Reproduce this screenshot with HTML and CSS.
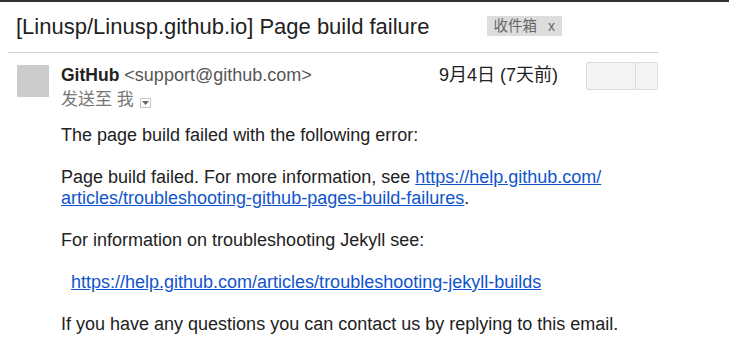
FILE: index.html
```html
<!DOCTYPE html>
<html lang="zh-CN">
<head>
    <meta charset="UTF-8">
    <title>[Linusp/Linusp.github.io] Page build failure</title>
    <link rel="stylesheet" href="styles.css">
</head>
<body>
    <div class="topbar"></div>
    <div class="mail">
        <div class="subject-row">
            <h2 class="subject">[Linusp/Linusp.github.io] Page build failure</h2>
            <span class="label">收件箱<span class="label-x">x</span></span>
        </div>

        <div class="message">
            <div class="avatar"></div>
            <div class="message-main">
                <div class="message-head">
                    <div class="sender-info">
                        <div class="from">
                            <span class="sender-name">GitHub</span>
                            <span class="sender-email">&lt;support@github.com&gt;</span>
                        </div>
                        <div class="to-line">
                            发送至 我
                            <span class="details-toggle">
                                <svg width="7" height="4" viewBox="0 0 7 4"><polygon points="0,0 7,0 3.5,4" fill="#666"/></svg>
                            </span>
                        </div>
                    </div>
                    <div class="date">9月4日 (7天前)</div>
                    <div class="actions">
                        <button class="btn-reply"></button>
                        <button class="btn-more"></button>
                    </div>
                </div>

                <div class="message-body">
                    <p>The page build failed with the following error:</p>
                    <p>Page build failed. For more information, see <a href="#">https://help.github.com/<br>articles/troubleshooting-github-pages-build-failures</a>.</p>
                    <p>For information on troubleshooting Jekyll see:</p>
                    <p class="indent"><a href="#">https://help.github.com/articles/troubleshooting-jekyll-builds</a></p>
                    <p>If you have any questions you can contact us by replying to this email.</p>
                </div>
            </div>
        </div>
    </div>
</body>
</html>
```

FILE: styles.css
```css
* {
    margin: 0;
    padding: 0;
    box-sizing: border-box;
}

body {
    background: white;
    font-family: "Liberation Sans", Arial, "Noto Sans CJK SC", sans-serif;
    color: #222;
}

.topbar {
    height: 2px;
    background-color: #333;
}

.mail {
    margin-left: 8px;
    width: 650px;
}

.subject-row {
    display: flex;
    align-items: center;
    padding: 10px 0 10px 8px;
    border-bottom: 1px solid #cfcfcf;
}

.subject {
    font-size: 22px;
    font-weight: normal;
    line-height: 30px;
    color: #222;
}

.label {
    margin-left: 58px;
    margin-top: -2px;
    height: 20px;
    padding: 0 7px 0 6px;
    background-color: #ddd;
    color: #666;
    font-size: 14.5px;
    line-height: 20px;
}

.label-x {
    margin-left: 11px;
    font-size: 14px;
}

.message {
    display: flex;
    align-items: flex-start;
    padding-top: 9px;
}

.avatar {
    width: 32px;
    height: 32px;
    margin: 3px 12px 0 9px;
    background-color: #ccc;
    flex-shrink: 0;
}

.message-main {
    flex: 1;
}

.message-head {
    display: flex;
    align-items: flex-start;
}

.sender-info {
    flex: 1;
    padding-top: 3px;
}

.from {
    font-size: 18px;
    line-height: 20px;
}

.sender-name {
    font-weight: bold;
    font-size: 17.5px;
    color: #222;
}

.sender-email {
    color: #555;
}

.to-line {
    margin-top: 5px;
    font-size: 17px;
    line-height: 20px;
    color: #777;
    display: flex;
    align-items: center;
}

.to-line .details-toggle {
    display: inline-flex;
    align-items: center;
    justify-content: center;
    width: 11px;
    height: 10px;
    margin-left: 6px;
    margin-top: 5px;
    border: 1px solid #c8c8c8;
    background: white;
}

.date {
    padding-top: 3px;
    font-size: 18px;
    line-height: 20px;
    color: #222;
}

.actions {
    display: flex;
    margin-left: 28px;
}

.actions button {
    height: 28px;
    background-color: #f3f3f3;
    border: 1px solid #dcdcdc;
}

.btn-reply {
    width: 50px;
    border-radius: 2px 0 0 2px;
}

.btn-more {
    width: 22px;
    border-left: none !important;
    border-radius: 0 2px 2px 0;
}

.message-body {
    margin-top: 15px;
    font-size: 18px;
    line-height: 21px;
    color: #222;
}

.message-body p {
    margin-bottom: 21px;
}

.message-body a {
    color: #15c;
}

.message-body .indent {
    padding-left: 10px;
}
```
